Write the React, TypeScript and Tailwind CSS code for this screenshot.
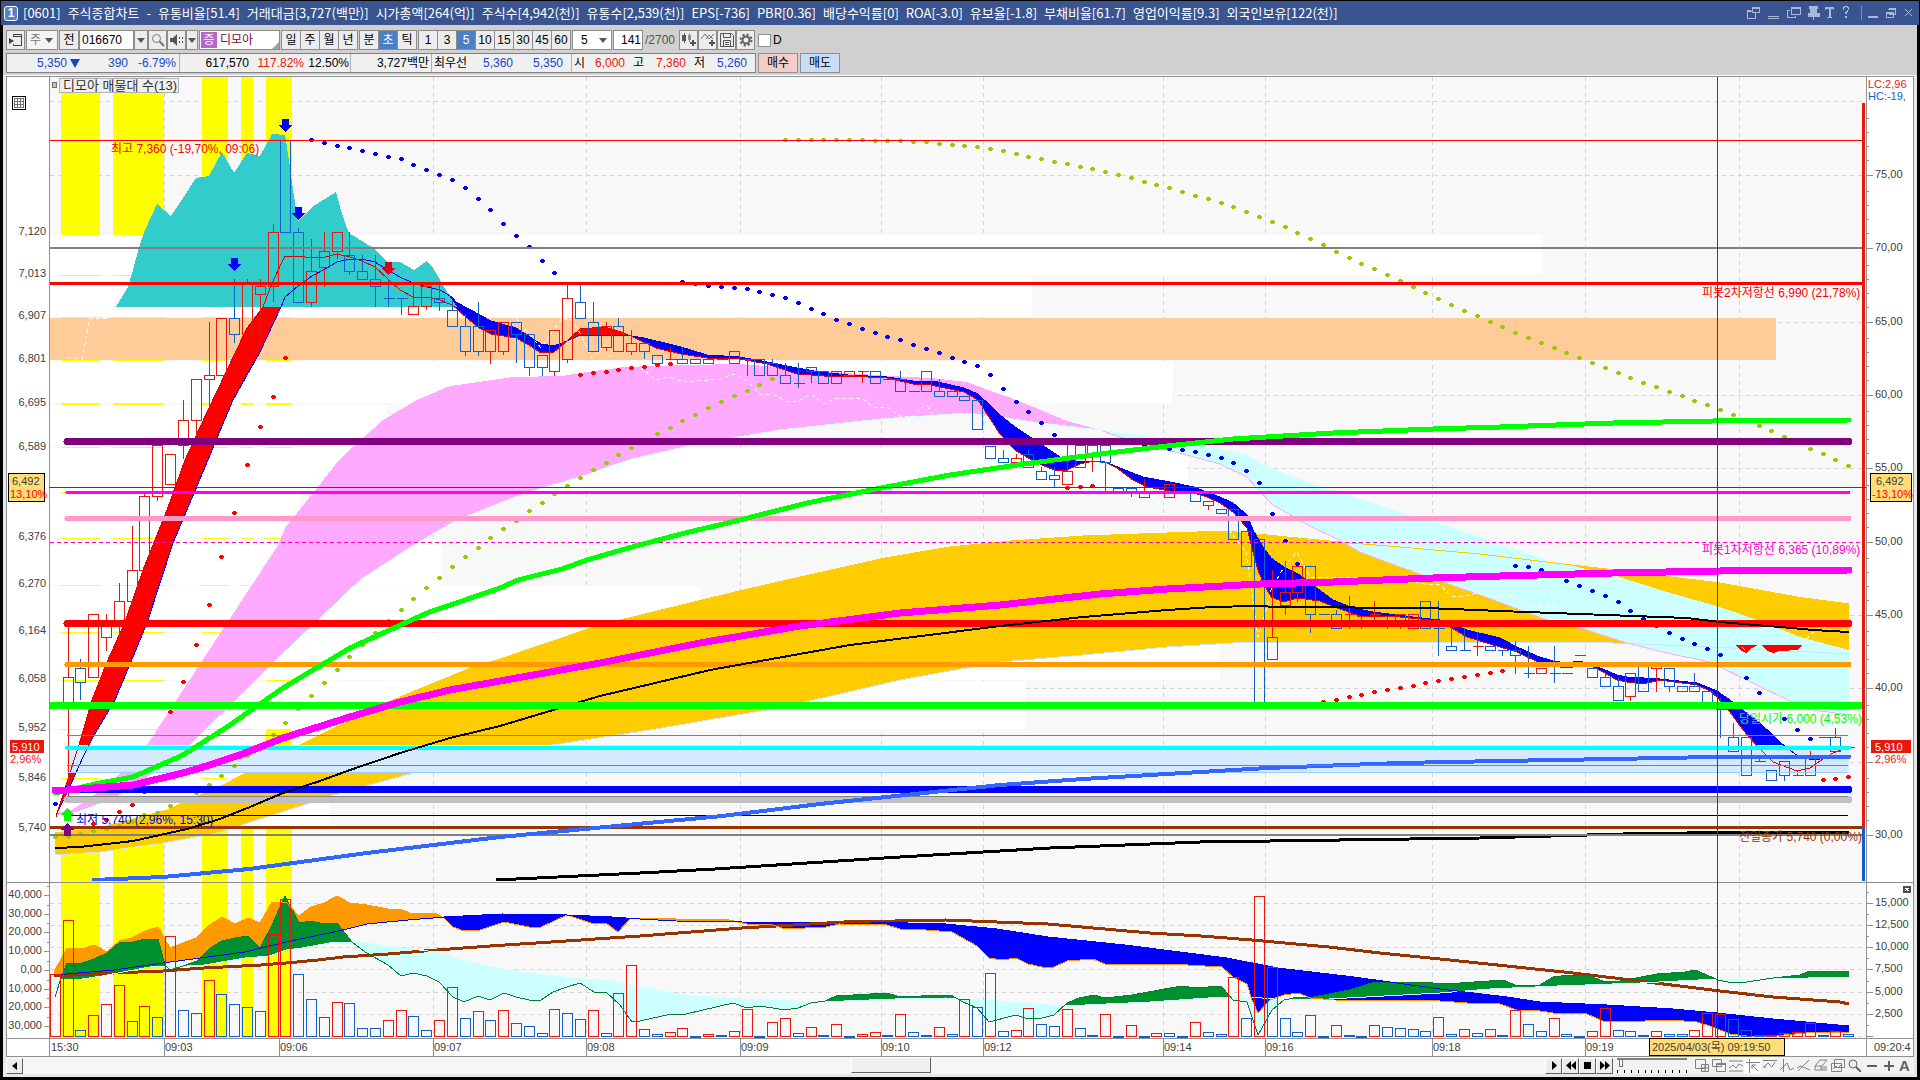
import type { ReactNode } from 'react'

type Point = [number, number]

const STEP = 12.81
const FIRST_X = 54.8
const UP = '#e8180c'
const DOWN = '#1060c8'

const candleX = (i: number) => Math.round(FIRST_X + i * STEP)

const parse = (s: string): Point[] =>
  s
    .trim()
    .split(/\s+/)
    .map((p) => p.split(',').map(Number) as Point)

const join = (pts: Point[]) => pts.map((p) => p.join(',')).join(' ')

// direction, high, body top, body bottom, low
const CANDLES = `
r623,677,704,800 b659,668,682,700 r614,614,677,677 r614,623,637,651 r583,601,623,647 r526,570,601,608 r492,496,570,570
r445,445,496,501 r454,454,484,484 r400,420,445,459 r379,379,420,437 r322,375,379,408 r318,318,375,375 b279,318,334,343
r279,284,334,334 r279,286,294,335 r224,232,286,302 b140,140,232,232 b228,232,302,302 r239,271,302,307 r232,251,267,287
r232,232,251,259 b232,255,271,275 b255,271,279,279 b255,279,286,307 b280,298,298,307 b298,298,298,315 r284,306,314,314
r286,286,306,310 b284,298,302,311 b300,310,326,326 b314,326,351,356 b302,326,351,356 r330,330,351,364 r322,322,351,355
b322,322,334,363 b334,334,367,376 b355,355,367,376 r330,330,371,376 r285,298,359,363 b285,302,318,318 b302,322,351,351
r322,326,347,351 b318,326,351,351 r330,343,351,355 b343,343,351,359 b355,355,363,363 r347,359,359,359 b347,359,363,363
b359,359,363,363 r359,359,363,363 r359,359,359,359 r351,351,363,363 b359,359,359,376 b359,359,375,375 b359,363,375,375
b363,375,383,383 b363,383,383,388 b367,367,371,383 b371,371,383,383 r371,371,383,383 r371,371,375,375 r371,371,371,383
b371,371,383,383 r379,379,379,379 b371,379,391,391 b391,391,391,391 r371,371,391,391 b379,391,396,396 b391,391,396,396
b396,396,400,400 b400,400,429,429 b446,446,458,458 b450,458,462,462 r454,458,462,462 b450,454,467,467 b467,471,479,479
b467,475,479,488 r441,471,484,484 r445,445,467,467 r445,445,454,472 b445,445,462,492 b488,488,492,492 b488,488,492,497
r479,492,497,497 r492,492,492,492 r484,484,497,497 b492,492,492,492 b492,492,501,501 r501,501,505,510 b509,509,513,513
b509,509,539,539 b531,531,566,566 b539,539,703,703 r570,637,659,659 r561,592,605,615 r566,566,592,602 b566,566,614,633
b614,614,614,614 b610,614,628,628 r596,614,614,629 r616,616,616,629 r601,614,614,623 r616,616,616,629 r614,614,623,629
r614,614,628,628 b601,601,628,628 b601,628,628,656 b623,646,650,650 b628,650,650,650 r632,646,646,656 b646,646,650,650
b650,650,650,656 b641,650,655,674 b646,673,673,678 r668,668,673,673 b646,673,673,683 b673,673,673,673 r655,655,655,655
b668,668,677,677 b673,677,686,686 b677,686,700,700 r673,673,696,701 b664,664,691,691 r664,664,668,692 b668,668,686,692
b686,686,691,691 b673,686,691,691 b691,691,703,703 b698,709,709,738 b723,737,751,751 b737,737,775,775 r756,761,761,761
b770,770,780,780 b761,761,775,781 b770,775,775,775 r751,756,775,775 r737,737,737,737 b728,737,751,751 r747,747,747,747`
  .trim()
  .split(/\s+/)
  .map((s) => ({ up: s[0] === 'r', v: s.slice(1).split(',').map(Number) }))

const VOLUMES = `
r974 r920 b1030 r1015 r1004 r985 b1021 r1006 b1017 r936 b1010 b1013 r980 b994 b1004 b1007 b1011 r934 r899 b974
b999 b1017 r1002 b1003 b1028 b1028 r1020 r1010 b1016 b1030 r1020 r987 b1018 r1011 b1020 r1010 b1023 b1026 b1033 r1009
b1013 b1019 r1010 b1033 r993 r965 b1029 b1034 r1032 r1028 b1036 r1034 b1035 r1031 r1009 b1036 r1022 r1018 b1033 r1027
b1035 r1024 b1036 r1034 r1032 b1035 r1014 b1032 b1035 r1027 b1034 r999 b1007 r973 b1031 r1030 r1008 b1024 b1026 r1009
b1028 b1035 r1014 b1036 r1025 b1036 r1033 b1033 b1036 r1022 b1032 b1034 r977 b1018 r896 b967 b1018 b1032 r1015 b1036
r1025 b1035 b1036 r1025 b1027 b1028 b1029 b1031 r1017 b1034 r1029 b1033 r1029 b1035 r1010 b1024 b1031 r1018 b1034 b1036
r1031 r1008 b1030 b1031 b1035 r1031 b1034 b1034 r1030 r1013 r1014 b1019 b1030 b1035 r1035 r1033 r1032 r1023 b1035 r1031 b1034`
  .trim()
  .split(/\s+/)
  .map((s) => ({ up: s[0] === 'r', top: Number(s.slice(1)) }))

const FAST = parse(`56,817 67,782 79,745 92,700 107,662 125,622 143,570 167,510 185,460 200,427 227,370 247,328 263,307 272,283
285,256 298,256 312,258 325,257 337,254 350,257 362,261 375,267 388,279 400,290 413,297 427,297 440,300 452,305 457,309 467,318
479,328 491,334 516,338 529,345 541,353 554,352 567,341 580,329 605,327 618,331 631,336 656,348 681,354 707,358 740,359 767,364
797,374 824,376 848,376 887,378 913,384 926,384 964,392 978,400 1000,434 1015,450 1028,458 1042,465 1057,471 1067,470 1080,464
1093,461 1105,462 1117,468 1133,480 1147,487 1170,491 1194,493 1207,497 1220,503 1233,512 1247,528 1253,552 1258,570 1263,582
1271,597 1284,602 1297,598 1320,601 1337,608 1360,616 1400,617 1440,621 1450,627 1467,637 1500,647 1517,652 1540,663 1553,666
1567,668 1579,666 1593,667 1603,672 1617,680 1627,682 1643,684 1660,680 1697,685 1710,691 1718,698 1730,712 1743,730 1757,746
1773,762 1797,771 1810,768 1823,759 1833,753 1848,747`)

const SLOW = parse(`56,815 67,793 83,757 93,737 115,700 133,657 147,623 173,543 208,460 217,438 233,400 260,352 281,307 285,297
298,286 312,276 325,269 337,262 350,259 362,259 375,262 388,270 400,277 413,283 427,287 440,290 452,297 456,302 467,308 491,321
516,328 541,344 554,346 567,341 580,335 618,335 631,336 644,338 681,347 707,355 740,357 767,362 797,368 820,372 848,375 887,377
913,381 938,382 964,388 978,394 1000,415 1015,427 1042,445 1060,457 1080,462 1093,461 1105,462 1120,468 1143,477 1170,482
1194,487 1207,492 1220,497 1233,503 1247,515 1253,530 1263,547 1271,558 1284,567 1300,575 1310,583 1333,600 1353,608 1373,612
1413,617 1440,620 1467,630 1500,638 1517,647 1537,656 1553,661 1567,663 1579,661 1593,665 1617,675 1627,677 1660,679 1697,683
1717,691 1730,700 1740,708 1760,723 1782,744 1798,756 1813,760 1833,757 1848,755`)

const TEAL = '116,307 128,287 133,270 139,247 145,230 157,204 171,216 183,198 196,178 209,176 222,152 234,173 247,153 260,156 272,134 285,135 289,160 293,190 298,221 312,207 336,192 340,207 345,223 349,233 373,248 388,262 400,262 414,270 427,261 433,268 440,280 450,297 457,307'

const PINK = `56,813 72,810 97,793 117,777 147,745 183,690 227,623 277,547 285,528 317,488 339,460 353,447 383,420 417,400 450,386
500,379 513,377 562,376 587,372 624,367 685,365 738,364 779,367 844,373 889,376 930,378 967,382 991,391 1011,398 1036,408 1067,421
1100,430 1083,428 1033,422 1000,417 967,413 881,419 779,430 697,444 632,459 579,477 526,493 500,503 457,520 417,543 360,580 313,625
273,663 233,703 187,748 157,770 133,788 110,800 77,812 56,815`
const PINK_LOW = '77,812 110,800 133,788 157,770 187,748 233,703 273,663 313,625 360,580 417,543 457,520 500,503 526,493 579,477 632,459 697,444 779,430 881,419 967,413 1000,417 1033,422 1083,428 1100,430 1147,437 1180,442 1217,448'

const CYAN_LOW = '1849,715 1807,709 1790,701 1757,685 1710,662 1667,653 1627,643 1587,630 1553,622 1523,611 1480,595 1443,582 1400,567 1360,552 1337,539 1310,526 1273,505 1257,488 1247,477 1220,464 1187,455 1147,445 1117,436 1100,430'
const CYAN = `1100,430 1147,437 1180,442 1217,448 1247,455 1260,463 1287,475 1333,490 1400,512 1433,521 1480,537 1547,560 1613,575
1667,592 1720,607 1763,622 1800,637 1849,650 ${CYAN_LOW}`

const GOLD_TOP = '55,833 100,828 167,810 223,785 300,745 367,712 400,697 473,667 500,659 600,625 735,592 787,580 885,558 950,547 1011,541 1083,536 1167,533 1227,531 1277,536 1350,543 1400,547 1480,554 1563,564 1607,569 1663,576 1720,583 1797,597 1849,604'
const GOLD_LOW = '1849,654 1713,647 1613,643 1480,642 1400,642 1300,642 1233,643 1167,647 1083,655 1000,662 900,680 784,707 650,730 500,753 417,772 333,795 310,803 217,833 163,843 100,852 55,855'

const GREEN_MA = '55,793 100,783 133,777 183,755 227,727 283,688 350,648 427,613 500,588 518,580 562,569 587,560 632,547 685,533 740,520 807,503 881,488 950,475 1024,464 1100,454 1167,446 1233,439 1333,433 1433,429 1500,427 1613,423 1713,421 1849,420'
const MAGENTA_MA = '55,790 67,790 133,785 183,773 200,768 240,755 283,738 350,717 400,702 450,690 500,681 600,663 700,643 800,626 900,613 1000,605 1100,594 1167,589 1260,584 1333,582 1433,578 1500,576 1613,573 1720,571 1849,570'
const BLACK_MA = '55,848 80,847 133,841 187,829 217,820 250,807 283,793 317,782 350,770 400,753 450,738 500,726 600,696 710,670 850,645 1000,626 1083,617 1167,610 1213,607 1253,606 1283,607 1427,608 1500,611 1580,614 1687,618 1720,622 1780,627 1813,630 1849,632'
const ROYAL_MA = '94,880 163,877 249,869 367,853 500,837 722,816 820,804 1000,785 1083,779 1167,774 1267,768 1400,763 1500,761 1613,759 1713,757 1849,757'
const LONG_MA = '496,880 640,873 715,869 900,857 1050,848 1200,842 1480,838 1623,834 1687,833 1849,832'

const WHITE_LINES = [
  '67,357 82,359 90,318 107,318',
  '516,318 541,348 562,318 571,320 580,333 592,358 603,347 611,357',
  '640,367 656,380 669,377 681,381 695,381 721,379 733,374 747,381 760,394 773,394 786,401 798,401 811,394 824,404 836,398 862,398 874,408 887,407 900,416 913,417 926,404 939,424 952,424 964,428 975,447',
  '1113,493 1118,503 1157,503 1177,500 1194,510 1207,510 1220,518 1233,535 1246,553 1258,637 1267,607 1271,590 1284,567 1297,552 1310,577 1327,578 1348,577 1393,577 1425,584 1440,584 1451,596 1463,597 1476,593 1490,596 1513,597 1527,608 1540,606 1567,608 1579,597 1591,607 1604,610 1617,622 1630,603 1643,613 1656,595 1668,608 1694,611 1720,622 1732,637 1745,650',
  '1802,645 1810,635 1822,626 1835,632 1848,629',
]

// lower panel
const OSC_A = parse(`54,972 67,948 82,949 94,945 107,952 119,941 131,938 145,931 158,927 170,948 183,943 196,938 208,926 222,917
235,924 248,918 260,923 272,902 286,902 299,916 311,907 324,903 337,896 350,903 367,905 388,909 402,910 413,914 427,913 437,914
444,918 453,927 464,931 480,930 504,922 529,927 541,927 567,915 594,924 606,923 618,932 631,918 640,918 676,919 729,920 747,924
773,925 785,929 826,927 839,924 887,925 900,929 926,930 952,932 961,937 977,946 989,958 1002,960 1016,958 1028,964 1042,967
1054,967 1067,961 1093,959 1105,964 1171,964 1222,967 1233,977 1247,984 1252,1000 1258,1013 1270,1000 1284,995 1298,993
1311,998 1334,1000 1440,1001 1467,1003 1500,1004 1517,1010 1540,1011 1553,1013 1587,1014 1603,1021 1620,1022 1670,1020
1697,1022 1713,1027 1730,1034 1747,1036 1773,1036 1817,1032 1849,1033`)
const OSC_B = parse(`54,975 114,970 163,963 245,952 286,942 343,930 367,924 408,920 433,918 444,917 502,914 567,915 612,917 640,919
676,921 742,922 870,922 946,924 997,929 1048,937 1125,945 1227,958 1278,968 1354,977 1440,989 1507,997 1540,1002 1607,1005
1673,1009 1717,1013 1773,1019 1849,1026`)
const VOL_A = parse(`55,997 61,978 67,963 82,963 94,959 107,953 119,943 133,942 145,939 158,939 165,965 170,970 183,966 197,961
210,948 222,941 235,938 248,936 260,948 272,925 285,896 299,923 311,921 324,924 337,923 345,933 352,942 365,952 388,965 401,976
413,973 427,976 439,982 453,997 464,1002 478,996 490,1000 504,993 516,997 529,1000 541,1000 553,992 567,987 580,983 594,992
606,992 620,1005 632,1022 640,1021 671,1014 686,1014 733,1003 747,1008 760,1006 785,1010 798,1008 811,1003 825,1001 836,996
887,993 900,997 921,996 951,995 961,1001 977,1008 989,1022 1016,1015 1028,1019 1042,1018 1054,1015 1067,1003 1079,998 1094,995
1105,998 1132,995 1170,988 1182,986 1195,988 1221,986 1233,1000 1247,1002 1258,1035 1272,1010 1284,1000 1298,997 1308,998
1329,994 1349,990 1375,982 1426,982 1440,984 1460,983 1503,980 1515,985 1540,985 1553,977 1570,975 1590,976 1603,981 1620,981
1657,974 1685,972 1695,970 1707,975 1718,980 1733,983 1747,982 1773,978 1800,975 1810,971 1849,971`)
const VOL_B = parse(`55,980 82,979 102,976 155,966 170,967 204,965 245,958 269,956 286,950 302,948 335,942 352,942 367,943 392,947
437,952 457,959 490,967 531,973 571,978 612,981 640,987 691,996 742,999 793,1001 844,1001 895,999 946,998 997,1001 1063,1006
1150,1002 1222,997 1252,997 1283,1000 1329,999 1440,993 1490,989 1557,986 1640,983 1717,979 1767,979 1849,977`)
const BROWN = '54,976 114,973 163,971 204,968 261,965 286,963 318,960 343,957 388,954 424,951 490,946 551,942 640,936 742,928 793,925 844,922 946,920 997,922 1048,924 1150,933 1201,936 1252,940 1329,947 1380,953 1440,959 1507,966 1573,973 1623,979 1720,991 1773,997 1840,1002 1849,1004'

// parabolic dots: start index followed by y values
const DOTS: { color: string; start: number; ys: number[] }[] = [
  { color: '#0000ff', start: 0, ys: [804] },
  { color: '#0000ff', start: 20, ys: [140, 143, 146, 148, 151, 154, 157, 159, 165, 170, 175, 180, 188, 199, 210, 224, 236, 247, 261, 273] },
  { color: '#0000ff', start: 49, ys: [282, 284, 286, 287, 288, 289, 292, 295, 298, 303, 309, 314, 320, 324, 329, 333, 337, 340, 345, 349, 353, 358, 362, 366, 375, 389, 402, 412, 423, 435] },
  { color: '#0000ff', start: 85, ys: [445, 447, 449, 450, 452, 455, 458, 463, 471, 483, 514, 541, 564] },
  { color: '#0000ff', start: 114, ys: [566, 567, 570, 576, 581, 586, 591, 596, 602, 611, 619, 626, 633, 639, 644, 649, 655] },
  { color: '#0000ff', start: 132, ys: [678, 693] },
  { color: '#0000ff', start: 135, ys: [719, 730, 739] },
  { color: '#ff0000', start: 3, ys: [824, 820, 812, 805, 792] },
  { color: '#ff0000', start: 9, ys: [712, 682, 645, 605, 557, 513, 465, 427, 397, 358] },
  { color: '#ff0000', start: 41, ys: [375, 373, 372, 370, 368, 367, 365, 364] },
  { color: '#ff0000', start: 79, ys: [488, 487, 486] },
  { color: '#ff0000', start: 99, ys: [702, 700, 697, 695, 692, 690, 688, 686, 683, 681, 679, 677, 675, 673, 671] },
  { color: '#ff0000', start: 138, ys: [780, 779, 777] },
  {
    color: '#99cc00',
    start: 0,
    ys: [837, 837, 834, 831, 829, 826, 822, 815, 813, 806, 800, 793, 785, 776, 766, 756, 745, 735, 723, 709, 696, 683, 670, 657, 645, 633, 621, 610, 599, 588, 578, 567, 557, 548, 538, 529, 521, 511, 503, 494, 486, 478, 470, 463, 455, 448, 441, 434, 428, 421, 415, 408, 402, 396, 391, 385, 379],
  },
]

const OLIVE_KEYS = parse('784,140 850,140 920,142 980,147 1041,159 1102,171 1176,190 1237,208 1298,233 1347,257 1408,285 1489,322 1566,353 1630,378 1707,405 1745,420 1784,437 1848,466')

function interpolate(keys: Point[], x: number) {
  for (let k = 1; k < keys.length; k++) {
    const [x0, y0] = keys[k - 1]
    const [x1, y1] = keys[k]
    if (x <= x1) return Math.round(y0 + ((x - x0) / (x1 - x0)) * (y1 - y0))
  }
  return keys[keys.length - 1][1]
}

DOTS.push({
  color: '#99cc00',
  start: 57,
  ys: Array.from({ length: 84 }, (_, k) => interpolate(OLIVE_KEYS, FIRST_X + (57 + k) * STEP)),
})

const TIMES: [number, string][] = [
  [164, '09:03'], [279, '09:06'], [433, '09:07'], [586, '09:08'], [740, '09:09'], [881, '09:10'],
  [983, '09:12'], [1163, '09:14'], [1265, '09:16'], [1432, '09:18'], [1585, '09:19'],
]

const LEFT_PRICES: [number, string][] = [
  [231, '7,120'], [273, '7,013'], [315, '6,907'], [358, '6,801'], [402, '6,695'], [446, '6,589'], [536, '6,376'],
  [583, '6,270'], [630, '6,164'], [678, '6,058'], [727, '5,952'], [777, '5,846'], [827, '5,740'],
]
const RIGHT_RATES: [number, string][] = [
  [175, '75,00'], [248, '70,00'], [322, '65,00'], [395, '60,00'], [468, '55,00'],
  [542, '50,00'], [615, '45,00'], [688, '40,00'], [762, ''], [835, '30,00'],
]
const LEFT_SUB: [number, string][] = [
  [895, '40,000'], [914, '30,000'], [932, '20,000'], [951, '10,000'], [970, '0,00'],
  [989, '10,000'], [1007, '20,000'], [1026, '30,000'],
]
const RIGHT_SUB: [number, string][] = [
  [903, '15,000'], [925, '12,500'], [947, '10,000'], [969, '7,500'], [992, '5,000'], [1014, '2,500'], [1036, ''],
]

const STRIPES = [[61, 39], [113, 51], [202, 26], [241, 12], [266, 26]]

const PROFILE = [
  [235, 40, 1543], [276, 41, 1032], [361, 42, 1173], [405, 42, 387], [448, 44, 1188], [493, 45, 300],
  [539, 46, 442], [586, 46, 700], [633, 47, 1220], [681, 48, 1026], [730, 48, 264], [779, 49, 330],
]

const LEVELS = [
  { y: 140.5, w: 1, x1: 49, x2: 1862, c: '#ff0000' },
  { y: 248, w: 2, x1: 49, x2: 1862, c: '#808080' },
  { y: 283.5, w: 3, x1: 49, x2: 1862, c: '#ff0000' },
  { y: 441.5, w: 7, x1: 67, x2: 1849, c: '#800080', round: true },
  { y: 492.5, w: 3, x1: 67, x2: 1849, c: '#ff00ff', round: true },
  { y: 518.5, w: 5, x1: 67, x2: 1849, c: '#ff99cc', round: true },
  { y: 623.5, w: 7, x1: 67, x2: 1849, c: '#ff0000', round: true },
  { y: 664.5, w: 5, x1: 67, x2: 1849, c: '#ff9900', round: true },
  { y: 735.5, w: 1, x1: 67, x2: 1848, c: '#808080' },
  { y: 747.5, w: 4, x1: 67, x2: 1849, c: '#00ffff', round: true },
  { y: 772.5, w: 1, x1: 67, x2: 1848, c: '#99ccff' },
  { y: 789.5, w: 7, x1: 67, x2: 1849, c: '#0000ff', round: true },
  { y: 799.5, w: 7, x1: 67, x2: 1849, c: '#c0c0c0', round: true },
  { y: 796.5, w: 1, x1: 67, x2: 1848, c: '#808080' },
  { y: 815.5, w: 1, x1: 71, x2: 1848, c: '#000000' },
  { y: 827.5, w: 3, x1: 49, x2: 1862, c: '#993300' },
]

// fills the gap between two lines, one colour where a is on top and another where b is
function Cloud({ id, a, b, above, below }: { id: string; a: Point[]; b: Point[]; above: string; below: string }) {
  const shape = join([...a, ...[...b].reverse()])
  const x0 = b[0][0] - 5
  const x1 = b[b.length - 1][0] + 5
  return (
    <>
      <clipPath id={`${id}-up`}>
        <polygon points={`${x0},0 ${x0},${b[0][1]} ${join(b)} ${x1},0`} />
      </clipPath>
      <clipPath id={`${id}-down`}>
        <polygon points={`${x0},1100 ${x0},${b[0][1]} ${join(b)} ${x1},1100`} />
      </clipPath>
      <polygon points={shape} fill={above} clipPath={`url(#${id}-up)`} />
      <polygon points={shape} fill={below} clipPath={`url(#${id}-down)`} />
    </>
  )
}

function Line({ points, color, width = 1, dash }: { points: string; color: string; width?: number; dash?: string }) {
  return <polyline points={points} fill="none" stroke={color} strokeWidth={width} strokeDasharray={dash} strokeLinecap={width > 3 ? 'round' : 'butt'} />
}

function Arrow({ x, y, color, up = false }: { x: number; y: number; color: string; up?: boolean }) {
  const s = up ? -1 : 1
  return (
    <polygon
      fill={color}
      points={`${x - 3},${y - 12 * s} ${x + 4},${y - 12 * s} ${x + 4},${y - 6 * s} ${x + 7},${y - 6 * s} ${x},${y + s} ${x - 6},${y - 6 * s} ${x - 3},${y - 6 * s}`}
    />
  )
}

function Chart() {
  return (
    <svg
      viewBox="6 75 1908 982"
      className="block h-auto w-full bg-white font-['Liberation_Sans','Noto_Sans_CJK_KR',sans-serif] text-[11px]"
      shapeRendering="crispEdges"
      role="img"
      aria-label="디모아 주식종합차트"
    >
      <clipPath id="plot"><rect x="50" y="77" width="1812" height="804" /></clipPath>

      <rect x="49" y="76" width="1817" height="962" fill="#f8f8f8" />

      {/* grid */}
      <g stroke="#d4d4d4" strokeDasharray="4 4">
        {[101, 175, 248, 322, 395, 468, 615, 688, 762, 903, 925, 947, 969, 992, 1014, 1036].map((y) => (
          <line key={y} x1="50" x2="1866" y1={y + 0.5} y2={y + 0.5} />
        ))}
        {[...TIMES.map((t) => t[0]), 1739].map((x) => (
          <line key={x} y1="77" y2="1037" x1={x + 0.5} x2={x + 0.5} />
        ))}
      </g>
      {STRIPES.map(([x, w]) => (
        <rect key={x} x={x} y="77" width={w} height="961" fill="#ffff00" />
      ))}
      {PROFILE.map(([y, h, right]) => (
        <rect key={y} x="50" y={y} width={right - 50} height={h} fill="#ffffff" />
      ))}
      <rect x="50" y="318" width="1726" height="42" fill="#ffcc99" />

      <g clipPath="url(#plot)">
        <polygon points={`${GOLD_TOP} ${GOLD_LOW}`} fill="#ffcc00" />
        <polygon points={PINK} fill="#ffaaff" />
        <polygon points={CYAN} fill="#ccffff" />
        <Line points={GOLD_TOP} color="#ffcc00" />
        <Line points={GOLD_LOW} color="#c8e4ff" />
        <Line points={CYAN_LOW} color="#ffaaff" />
        <Line points={PINK_LOW} color="#ccffff" />
        <Cloud id="ribbon" a={FAST} b={SLOW} above="#ff0000" below="#0000ff" />
        <polygon points="1736,645 1740,650 1746,653 1752,648 1758,645" fill="#ff0000" />
        <polygon points="1761,645 1767,651 1773,653 1780,651 1797,650 1802,645" fill="#ff0000" />
        <rect x="67" y="745" width="1782" height="28" fill="#d6eaff" />
        <polygon points={TEAL} fill="#33cccc" />
        {WHITE_LINES.map((pts) => (
          <Line key={pts} points={pts} color="#ffffff" dash="4 3" />
        ))}
        <Line points={join(SLOW)} color="#0000ff" />
        <Line points={join(FAST)} color="#e00000" />

        {DOTS.map((d) =>
          d.ys.map((y, k) => {
            const x = candleX(d.start + k)
            return <path key={`${d.color}${d.start}-${k}`} d={`M${x - 1},${y - 2}h3v1h1v2h-1v1h-3v-1h-1v-2h1z`} fill={d.color} />
          }),
        )}

        {CANDLES.map(({ up, v: [high, top, bottom, low] }, k) => {
          const x = candleX(k + 1) + 0.5
          return (
            <g key={k} stroke={up ? UP : DOWN} fill="none">
              {high < top && <line x1={x} x2={x} y1={high} y2={top} />}
              {low > bottom && <line x1={x} x2={x} y1={bottom} y2={low} />}
              {top === bottom ? (
                <line x1={x - 5} x2={x + 6} y1={top + 0.5} y2={top + 0.5} />
              ) : (
                <rect x={x - 5} y={top + 0.5} width="10" height={bottom - top} />
              )}
            </g>
          )
        })}

        {LEVELS.map((l) => (
          <line key={l.y} x1={l.x1} x2={l.x2} y1={l.y} y2={l.y} stroke={l.c} strokeWidth={l.w} strokeLinecap={l.round ? 'round' : 'butt'} />
        ))}
        <line x1="50" x2="1862" y1="542.5" y2="542.5" stroke="#ff00cc" strokeDasharray="4 3" />
        <Line points={LONG_MA} color="#000000" width={3} />
        <line x1="49" x2="1862" y1="835" y2="835" stroke="#808080" strokeWidth="2" />
        <Line points={ROYAL_MA} color="#3366ff" width={4} />
        <line x1="67" x2="1848" y1="765.5" y2="765.5" stroke="#808080" />
        <Line points={BLACK_MA} color="#000000" width={2} />
        <Line points={GREEN_MA} color="#00ff00" width={5} />
        <line x1="49" x2="1862" y1="705.5" y2="705.5" stroke="#00ff00" strokeWidth="7" />
        <Line points={MAGENTA_MA} color="#ff00ff" width={7} />

        <Arrow x={285} y={131} color="#0000ff" />
        <Arrow x={298} y={219} color="#0000ff" />
        <Arrow x={234} y={270} color="#0000ff" />
        <Arrow x={388} y={274} color="#e0001a" />
        <Arrow x={67} y={809} color="#00ff00" up />
        <Arrow x={67} y={824} color="#800080" up />

        <g className="text-[12px]">
          <text x="111" y="153" fill="#ff0000">최고 7,360 (-19,70%, 09:06)</text>
          <text x="76" y="824" fill="#0000e0">최저 5,740 (2,96%, 15:30)</text>
          <text x="1702" y="297" fill="#ff0000">피봇2차저항선 6,990 (21,78%)</text>
          <text x="1702" y="554" fill="#ff00cc">피봇1차저항선 6,365 (10,89%)</text>
          <text x="1739" y="723" fill="#00ff00">당일시가 6,000 (4,53%)</text>
          <text x="1739" y="841" fill="#993300">전일종가 5,740 (0,00%)</text>
        </g>
      </g>

      {/* lower panel */}
      <Cloud id="vol" a={VOL_A} b={VOL_B} above="#ff9900" below="#ccffff" />
      <Cloud id="osc" a={OSC_A} b={OSC_B} above="#ff9900" below="#0000ff" />
      <clipPath id="vol-top">
        <polygon points={`50,880 50,980 ${join(VOL_B)} 1849,880`} />
      </clipPath>
      <polygon points={join([...VOL_A, ...[...VOL_B].reverse()])} fill="#009030" clipPath="url(#vol-top)" />
      <Line points={BROWN} color="#993300" width={3} />
      <Line points={join(VOL_B)} color="#ccffff" />
      <Line points={join(VOL_A)} color="#008030" />
      <Line points={join(OSC_A)} color="#ff9900" />
      <Line points={join(OSC_B)} color="#0000ff" />
      {VOLUMES.map(({ up, top }, k) => (
        <rect key={k} x={candleX(k) - 4.5} y={top + 0.5} width="10" height={Math.max(0.5, 1036 - top)} fill="none" stroke={up ? UP : DOWN} />
      ))}

      {/* frames */}
      <g stroke="#909090" fill="none">
        <path d="M6,76.5H1913.5V1056.5H6.5V76" />
        <path d="M6,882.5H1913M6,1038.5H1913M49.5,76V1056M1866.5,76V1056" />
        {TIMES.map(([x]) => (
          <line key={x} x1={x + 0.5} x2={x + 0.5} y1="1038" y2="1056" />
        ))}
        {LEFT_SUB.map(([y]) => (
          <path key={y} d={`M44,${y + 0.5}h5M47,${y - 8.5}h2`} />
        ))}
        {RIGHT_SUB.map(([y]) => (
          <path key={y} d={`M1867,${y + 0.5}h6M1867,${y - 10.5}h2`} />
        ))}
        {RIGHT_RATES.map(([y]) => (
          <path key={y} d={`M1867,${y + 0.5}h6M1867,${y - 14.5}h2M1867,${y - 28.5}h2M1867,${y - 42.5}h2M1867,${y - 56.5}h2`} />
        ))}
      </g>
      <rect x="1862" y="103" width="3" height="725" fill="#e8180c" />
      <rect x="1862" y="828" width="3" height="53" fill="#1060c8" />

      <g fill="#404040">
        {LEFT_PRICES.map(([y, t]) => (
          <text key={t} x="46" y={y + 4} textAnchor="end">{t}</text>
        ))}
        {LEFT_SUB.map(([y, t]) => (
          <text key={y} x="42" y={y + 3} textAnchor="end">{t}</text>
        ))}
        {RIGHT_RATES.map(([y, t]) => (
          <text key={y} x="1875" y={y + 3}>{t}</text>
        ))}
        {RIGHT_SUB.map(([y, t]) => (
          <text key={y} x="1875" y={y + 3}>{t}</text>
        ))}
        <text x="51" y="1051">15:30</text>
        {TIMES.map(([x, t]) => (
          <text key={t} x={x + 1} y="1051">{t}</text>
        ))}
        <text x="1874" y="1051">09:20:4</text>
      </g>
      <text x="1868" y="88" fill="#e8180c">LC:2,96</text>
      <text x="1868" y="100" fill="#1060c8">HC:-19,</text>

      {/* cursor */}
      <line x1="49" x2="1866" y1="487.5" y2="487.5" stroke="#e00000" />
      <line x1="1717.5" x2="1717.5" y1="77" y2="1038" stroke="#e00000" />

      <rect x="8.5" y="473.5" width="36" height="28" fill="#ffdd77" stroke="#000000" />
      <rect x="1870.5" y="473.5" width="41" height="28" fill="#ffdd77" stroke="#000000" />
      <text x="12" y="485" fill="#404040">6,492</text>
      <text x="10" y="498" fill="#ff0000">13,10%</text>
      <rect x="10" y="740" width="34" height="13" fill="#e8180c" />
      <text x="12" y="751" fill="#ffffff">5,910</text>
      <text x="10" y="763" fill="#e8180c">2,96%</text>
      <text x="1876" y="485" fill="#404040">6,492</text>
      <text x="1872" y="498" fill="#ff0000">-13,10%</text>
      <rect x="1871" y="740" width="40" height="13" fill="#e8180c" />
      <text x="1875" y="751" fill="#ffffff">5,910</text>
      <text x="1875" y="763" fill="#e8180c">2,96%</text>

      <rect x="1649.5" y="1038.5" width="135" height="17" fill="#ffdd77" stroke="#000000" />
      <text x="1652" y="1051" fill="#404040">2025/04/03(목) 09:19:50</text>

      <rect x="59.5" y="78.5" width="119" height="14" fill="#f0f0f0" stroke="#b0b0b0" />
      <text x="63" y="90" fill="#303030" className="text-[13px]">디모아 매물대 수(13)</text>
      <rect x="52.5" y="82.5" width="4" height="5" fill="#c0c0c0" stroke="#707070" />
      <g fill="none" stroke="#000000">
        <rect x="12.5" y="96.5" width="13" height="13" />
        <path d="M14.5,98.5h9v9h-9zM14.5,101.5h9M14.5,104.5h9M17.5,98v9M20.5,98v9" stroke="#707070" />
      </g>
      <rect x="1903" y="886" width="8" height="7" fill="#505050" />
      <path d="M1905,888l4,3M1909,888l-4,3" stroke="#ffffff" />
    </svg>
  )
}

const BTN = 'flex h-5 items-center justify-center border border-[#8c8c8c] bg-[#ececec]'

function IconButton({ label, width = 'w-[19px]', children }: { label: string; width?: string; children: ReactNode }) {
  return (
    <button type="button" aria-label={label} className={`${BTN} ${width}`}>
      {children}
    </button>
  )
}

function Caret() {
  return (
    <svg width="8" height="5" viewBox="0 0 8 5" aria-hidden="true">
      <path d="M0,0h8L4,5z" fill="#555555" />
    </svg>
  )
}

function Group({ items, active }: { items: string[]; active?: string }) {
  return (
    <div className="flex -space-x-px">
      {items.map((t) => (
        <button
          key={t}
          type="button"
          className={`h-5 w-5 border border-[#8c8c8c] ${t === active ? 'bg-[#4a80c4] text-white' : 'bg-[#ececec]'}`}
        >
          {t}
        </button>
      ))}
    </div>
  )
}

function Toolbar() {
  return (
    <div className="flex items-center gap-px px-[3px] pt-[5px] text-[12px] leading-4">
      <IconButton label="메뉴">
        <svg width="14" height="14" viewBox="0 0 14 14" fill="none" stroke="#404040">
          <path d="M4.5,4V1.5h8v11h-8V11M4.5,3.5h8" />
          <path d="M0,5l5,3-5,3z" fill="#404040" stroke="none" />
        </svg>
      </IconButton>
      <div className="relative">
        <select aria-label="구분" defaultValue="주" className="block h-5 w-8 appearance-none border border-[#8c8c8c] bg-[#f4f4f4] pl-[3px] text-[#777777]">
          <option>주</option>
        </select>
        <span className="pointer-events-none absolute top-2 right-[5px]"><Caret /></span>
      </div>
      <div className="flex">
        <button type="button" className={`${BTN} w-5`}>전</button>
        <input aria-label="종목코드" defaultValue="016670" className="h-5 w-[55px] border border-[#8c8c8c] bg-white pl-0.5" />
        <IconButton label="종목 목록" width="w-[14px]"><Caret /></IconButton>
        <IconButton label="종목 검색">
          <svg width="14" height="14" viewBox="0 0 14 14" fill="none" stroke="#777777">
            <circle cx="5.5" cy="5.5" r="4" />
            <path d="M8.5,8.5l4.5,4.5" strokeWidth="2" />
          </svg>
        </IconButton>
        <IconButton label="소리">
          <svg width="14" height="12" viewBox="0 0 14 12" fill="#555555">
            <path d="M0,4h3l4-4v12L3,8H0zM9,3h1v2H9zM9,7h1v2H9zM12,3h1v2h-1zM12,7h1v2h-1z" />
          </svg>
        </IconButton>
        <IconButton label="소리 설정" width="w-[12px]"><Caret /></IconButton>
      </div>
      <div className="flex h-5 w-[81px] border border-[#8c8c8c] bg-white">
        <span className="m-px w-4 bg-[#b966cc] text-center text-white">증</span>
        <input aria-label="종목명" defaultValue="디모아" className="w-12 bg-white pl-0.5 text-[#800040]" />
        <svg width="7" height="7" viewBox="0 0 7 7" className="mt-auto ml-auto" aria-hidden="true">
          <path d="M7,0v7H0z" fill="#a0a0a0" />
        </svg>
      </div>
      <Group items={['일', '주', '월', '년']} />
      <Group items={['분', '초', '틱']} active="초" />
      <Group items={['1', '3', '5', '10', '15', '30', '45', '60']} active="5" />
      <div className="relative">
        <select aria-label="주기" defaultValue="5" className="block h-5 w-10 appearance-none border border-[#8c8c8c] bg-white pl-2">
          <option>5</option>
        </select>
        <span className="pointer-events-none absolute top-2 right-[5px]"><Caret /></span>
      </div>
      <div className="flex items-center">
        <input aria-label="봉 개수" defaultValue="141" className="h-5 w-[30px] border border-[#8c8c8c] bg-white pr-px text-right" />
        <span className="w-[35px] pl-0.5 text-[#555555]">/2700</span>
      </div>
      <div className="flex">
        <IconButton label="차트 추가">
          <svg width="16" height="16" viewBox="0 0 16 16" fill="#555555">
            <path d="M1,3h4v6H1zM3,1h1v10H3zM11,8h2v2h2v2h-2v2h-2v-2H9v-2h2z" />
            <path d="M7,3h3v5H7zM8,1h1v9H8z" fill="#909090" />
          </svg>
        </IconButton>
        <IconButton label="지표 추가">
          <svg width="16" height="16" viewBox="0 0 16 16" fill="none" stroke="#777777">
            <path d="M1,7l4-5 4,5 5-5M6,7l3-4 4,4" />
            <path d="M11,8h2v2h2v2h-2v2h-2v-2H9v-2h2z" fill="#555555" stroke="none" />
          </svg>
        </IconButton>
        <IconButton label="저장">
          <svg width="14" height="14" viewBox="0 0 14 14" fill="none" stroke="#555555">
            <path d="M.5,.5h11l2,2v11H.5zM3.5,.5v4h7v-4M3.5,13.5v-6h7v6M5,9.5h4M5,11.5h4" />
          </svg>
        </IconButton>
        <IconButton label="설정">
          <svg width="14" height="14" viewBox="0 0 14 14" fill="none" stroke="#606060">
            <circle cx="7" cy="7" r="3.5" strokeWidth="2" />
            <circle cx="7" cy="7" r="5.5" strokeWidth="2" strokeDasharray="2.2 2.1" />
          </svg>
        </IconButton>
      </div>
      <label className="flex items-center gap-0.5 pl-0.5">
        <input type="checkbox" className="h-[13px] w-[13px] appearance-none border border-[#909090] bg-white" />D
      </label>
    </div>
  )
}

function Quote() {
  return (
    <div className="flex gap-0.5 px-[3px] pt-[3px] pb-0.5 text-[12px] leading-[18px]">
      <div className="flex h-5 border border-[#808080] bg-[#f0f0f0]">
        <div className="flex w-[173px] items-center border-r border-[#b0b0b0] text-[#1446c8]">
          <span className="w-[60px] text-right">5,350</span>
          <svg width="10" height="9" viewBox="0 0 10 9" className="ml-[3px]" aria-label="하락">
            <path d="M0,0h10L5,9z" fill="#1446c8" />
          </svg>
          <span className="w-12 text-right">390</span>
          <span className="w-12 text-right">-6.79%</span>
        </div>
        <div className="flex w-[171px] border-r border-[#b0b0b0]">
          <span className="w-[69px] text-right">617,570</span>
          <span className="w-[55px] text-right text-[#e8180c]">117.82%</span>
          <span className="w-[45px] text-right">12.50%</span>
        </div>
        <div className="w-[81px] border-r border-[#b0b0b0] pr-0.5 text-right">3,727백만</div>
        <div className="flex w-[140px] border-r border-[#b0b0b0] pl-0.5">
          <span className="w-9">최우선</span>
          <span className="w-[43px] text-right text-[#1446c8]">5,360</span>
          <span className="w-[50px] text-right text-[#1446c8]">5,350</span>
        </div>
        <div className="flex w-[183px] pl-0.5">
          <span className="w-4">시</span>
          <span className="w-[35px] text-right text-[#e8180c]">6,000</span>
          <span className="w-6 pl-2">고</span>
          <span className="w-[37px] text-right text-[#e8180c]">7,360</span>
          <span className="w-6 pl-2">저</span>
          <span className="w-[37px] text-right text-[#1446c8]">5,260</span>
        </div>
      </div>
      <button type="button" className="h-5 w-10 border border-[#909090] bg-[#f4ccc8]">매수</button>
      <button type="button" className="h-5 w-10 border border-[#909090] bg-[#c8def4]">매도</button>
    </div>
  )
}

const TITLE = [
  '[0601]', '주식종합차트', '-', '유통비율[51.4]', '거래대금[3,727(백만)]', '시가총액[264(억)]', '주식수[4,942(천)]', '유통수[2,539(천)]',
  'EPS[-736]', 'PBR[0.36]', '배당수익률[0]', 'ROA[-3.0]', '유보율[-1.8]', '부채비율[61.7]', '영업이익률[9.3]', '외국인보유[122(천)]',
]

function TitleBar() {
  return (
    <header className="mx-px mt-px flex h-6 items-center bg-[#39548f] pl-[3px] text-white">
      <span className="mr-[5px] flex h-[15px] w-[14px] items-center justify-center rounded-[3px] border border-white bg-[#5b7fc0] text-[12px] font-bold">1</span>
      <h1 className="flex gap-[7px] font-['Noto_Sans_CJK_KR',sans-serif] text-[13px] whitespace-nowrap">
        {TITLE.map((t) => (
          <span key={t}>{t}</span>
        ))}
      </h1>
      <svg width="170" height="16" viewBox="0 0 170 16" className="mr-[3px] ml-auto" fill="none" stroke="#a9b8da" shapeRendering="crispEdges" role="img" aria-label="창 제어">
        <path d="M6.5,2.5h7v5h-7zM6,3.5h8M5,5.5H1.5v8h8V8M1,6.5h5" />
        <path d="M22,11.5h11M22,13.5h11" />
        <path d="M45.5,2.5h9v7h-9zM45,3.5h10M44,5.5h-2.5v7h8V11" />
        <path d="M63,1h8v2h-1v5h3v3H62V8h2V3h-1zM67,11v4" fill="#a9b8da" />
        <path d="M79,2.5h9M79,3.5h9M79.5,2v3M87.5,2v3M83.5,2v10M84.5,2v10M81,12.5h5" />
        <path d="M97.5,5V2.5H99M98,1.5h4M101,2.5h1.500V5M101.500,5v1.500H100M100.500,6v3M99.500,7v2M99,11.500h2M99,12.500h2" />
        <path d="M115,1v14" stroke="#8b9099" />
        <path d="M122,12h10" strokeWidth="2" />
        <path d="M142.5,3.5h7v6h-7M142,4.5h8M140.5,7.5h7v5h-7zM140,8.5h8" />
        <path d="M159,4l7,7M166,4l-7,7" shapeRendering="auto" />
      </svg>
    </header>
  )
}

const SB = 'flex h-4 w-[17px] shrink-0 items-center justify-center border border-[#ffffff] border-r-[#606060] border-b-[#606060] bg-[#ececec]'

const PLAYER: [string, string][] = [
  ['재생', 'M4,1l5,4.5L4,10z'],
  ['뒤로', 'M6,1v9L1,5.5zM11,1v9L6,5.5z'],
  ['정지', 'M2,2h7v7H2z'],
  ['앞으로', 'M1,1l5,4.5L1,10zM6,1l5,4.5L6,10z'],
]

const TOOLS: [string, string][] = [
  ['창 추가', 'M.5,.5h10v9h-10zM6.5,5.5h7v7h-7zM10,6v7M7,9h6'],
  ['창 분리', 'M.5,.5h9v7h-9zM4.5,4.5h9v8h-9zM5,5.5h8'],
  ['비교', 'M0,2h14M0,9l4-3 3,3 3-4 4,2M0,12h14'],
  ['십자선', 'M0,3.5h14M3.5,0v14M6,6l6,6M6,6h4M6,6v4'],
  ['수평선', 'M0,1.5h14M1,8l4-4 4,4 3-5M0,8h3'],
  ['수직선', 'M3.5,0v13M0,11l4-4 3,-3 3,7 4-2'],
  ['추세선', 'M1,12L12,1M0,9l4-2 4,2 5,2'],
  ['지우개', 'M1,7l5-6h7l-5,6zM1,7v4h6V7M10,7v5M12,7v5M8,8v4'],
  ['겹침', 'M3.5,.5h10v8h-10zM.5,4.5h10v8h-10zM2,10l3-3 2,2 3-3'],
]

function ScrollRow() {
  return (
    <div className="flex h-[17px] items-center bg-[#f2f2f2]">
      <button type="button" aria-label="왼쪽으로" className={SB}>
        <svg width="5" height="8" viewBox="0 0 5 8"><path d="M5,0v8L0,4z" /></svg>
      </button>
      <div className="flex h-full grow bg-[#f6f6f6]">
        <span className="w-[54.4%]" />
        <span className="h-4 w-20 border border-white border-r-[#606060] border-b-[#606060] bg-[#efefef]" />
      </div>
      {PLAYER.map(([label, d]) => (
        <button key={label} type="button" aria-label={label} className={SB}>
          <svg width="12" height="11" viewBox="0 0 12 11"><path d={d} /></svg>
        </button>
      ))}
      <div className="ml-1 flex w-[70px] flex-col gap-1">
        <input
          type="range"
          aria-label="재생 속도"
          min="0"
          max="10"
          defaultValue="0.3"
          step="0.1"
          className="h-2 w-full appearance-none border-t-2 border-[#808080] bg-transparent [&::-webkit-slider-thumb]:h-2 [&::-webkit-slider-thumb]:w-1 [&::-webkit-slider-thumb]:appearance-none [&::-webkit-slider-thumb]:border [&::-webkit-slider-thumb]:border-[#707070] [&::-webkit-slider-thumb]:bg-white"
        />
        <div className="flex justify-between">
          {Array.from({ length: 11 }, (_, k) => (
            <span key={k} className="h-[3px] w-px bg-black" />
          ))}
        </div>
      </div>
      <div className="ml-1.5 flex">
        {TOOLS.map(([label, d]) => (
          <button key={label} type="button" aria-label={label} className={`flex h-4 w-[17px] items-center justify-center ${label === '십자선' ? 'bg-white' : ''}`}>
            <svg width="14" height="14" viewBox="0 0 14 14" fill="none" stroke="#808080"><path d={d} /></svg>
          </button>
        ))}
      </div>
      <div className="flex pr-0.5 text-[#606060]">
        <button type="button" aria-label="돋보기" className="flex w-[17px] items-center justify-center">
          <svg width="13" height="13" viewBox="0 0 13 13" fill="none" stroke="#606060">
            <circle cx="5" cy="5" r="4" />
            <path d="M8,8l5,5" strokeWidth="2" />
          </svg>
        </button>
        <button type="button" aria-label="축소" className="flex w-[17px] items-center justify-center">
          <svg width="10" height="10" viewBox="0 0 10 10"><path d="M0,4h10v2H0z" fill="#606060" /></svg>
        </button>
        <button type="button" aria-label="확대" className="flex w-[17px] items-center justify-center">
          <svg width="10" height="10" viewBox="0 0 10 10"><path d="M0,4h4V0h2v4h4v2H6v4H4V6H0z" fill="#606060" /></svg>
        </button>
        <button type="button" className="w-[15px] text-[15px] leading-4 font-bold">A</button>
      </div>
    </div>
  )
}

export default function App() {
  return (
    <div className="flex min-h-screen flex-col bg-black font-['Liberation_Sans','Noto_Sans_CJK_KR',sans-serif] text-black">
      <TitleBar />
      <main className="mx-[3px] bg-[#e8e8e8] pb-[3px]">
        <div className="bg-[#d0d0d0]">
          <Toolbar />
          <Quote />
        </div>
        <div className="px-[3px]">
          <Chart />
          <ScrollRow />
        </div>
      </main>
    </div>
  )
}
